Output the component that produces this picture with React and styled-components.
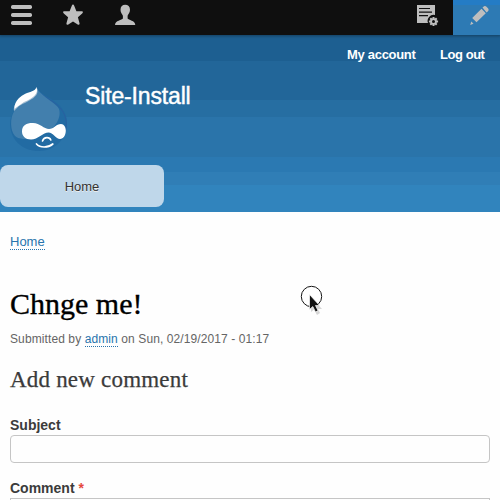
import React from "react";
import styled, { createGlobalStyle } from "styled-components";

const GlobalStyle = createGlobalStyle`
  * { box-sizing: border-box; }
  html, body { margin: 0; background: #fefefe; }
  body { overflow: hidden; font-family: "Liberation Sans", Arial, sans-serif; color: #3b3b3b; }
  h1, h2, p { margin: 0; font-weight: 400; white-space: nowrap; }
`;

const Page = styled.div`
  position: relative;
  width: 500px;
  height: 500px;
  overflow: hidden;
`;

const Toolbar = styled.nav`
  position: relative;
  display: flex;
  height: 35px;
  background: #0f0f0f;
  box-shadow: 0 0 3px 1px rgba(0, 0, 0, 0.35);
`;

const ToolbarItem = styled.div`
  width: ${(p) => p.$width}px;
  height: 35px;
  padding-left: ${(p) => p.$inset}px;
  margin-left: ${(p) => (p.$push ? "auto" : 0)};
  background: ${(p) =>
    p.$active ? "linear-gradient(#247cc5 0 5px, #2d7ab4 5px)" : "transparent"};
  svg { display: block; }
`;

const Header = styled.header`
  height: 177px;
  background: linear-gradient(
    #1d5f91 0 26px,
    #226699 26px 65px,
    #266ea2 65px 82px,
    #2a74aa 82px 122px,
    #2b79b2 122px 137px,
    #307eb6 137px 150px,
    #3184bd 150px
  );
`;

const AccountMenu = styled.div`
  display: flex;
  justify-content: flex-end;
  gap: 24px;
  height: 50px;
  padding: 12px 16px 0 0;
`;

const AccountLink = styled.a`
  width: ${(p) => p.$width}px;
  font-size: 13px;
  line-height: 16px;
  font-weight: 700;
  letter-spacing: ${(p) => p.$tracking}px;
  color: #fff;
  white-space: nowrap;
`;

const Branding = styled.div`
  display: flex;
  height: 80px;
  padding-left: 8px;
  gap: 13px;
`;

const SiteName = styled.div`
  padding-left: 2px;
  font-size: 23px;
  line-height: 23px;
  letter-spacing: -0.15px;
  -webkit-text-stroke: 0.45px #fff;
  color: #fff;
  white-space: nowrap;
`;

const MenuTab = styled.div`
  width: 164px;
  height: 42px;
  border-radius: 8px;
  background: #bfd7ea;
  color: #333;
  font-size: 13px;
  line-height: 43px;
  text-align: center;
  text-shadow: 0 1px 0 #eee;
`;

const Content = styled.main`
  padding: 22px 10px 0;
`;

const Link = styled.a`
  display: inline-block;
  color: #2874ad;
  border-bottom: 1px dotted #2874ad;
`;

const Breadcrumb = styled.div`
  height: 53px;
  font-size: 13px;
  line-height: 15px;
`;

const Title = styled.h1`
  height: 45px;
  font-family: "Liberation Serif", serif;
  font-size: 30px;
  line-height: 34px;
  letter-spacing: 0;
  -webkit-text-stroke: 0.35px #000;
  color: #000;
`;

const Submitted = styled.p`
  height: 34px;
  font-size: 12px;
  line-height: 15px;
  letter-spacing: 0.1px;
  color: #656565;
  a { line-height: 14px; }
`;

const Subtitle = styled.h2`
  height: 50px;
  font-family: "Liberation Serif", serif;
  font-size: 23px;
  line-height: 28px;
  letter-spacing: 0.2px;
  -webkit-text-stroke: 0.25px #3b3b3b;
`;

const Label = styled.label`
  display: block;
  height: 19px;
  font-size: 14px;
  line-height: 18px;
  font-weight: 700;
`;

const Required = styled.span`
  color: #e5483f;
`;

const Field = styled.div`
  height: ${(p) => p.$height}px;
  margin-bottom: 16px;
  border: 1px solid #c5c5c5;
  border-radius: ${(p) => p.$radius}px;
  background: #fefefe;
`;

const Cursor = styled.svg`
  position: absolute;
  left: 299px;
  top: 284px;
`;

const IconMenu = () => (
  <svg width="22" height="26" fill="#bebebe">
    <rect x="0" y="5" width="21" height="4" rx="1.7" />
    <rect x="0" y="13" width="21" height="4" rx="1.7" />
    <rect x="0" y="21" width="21" height="4" rx="1.7" />
  </svg>
);

const IconStar = () => (
  <svg width="22" height="26" fill="#bebebe">
    <path d="M10 4.5Q10.8 4.5 11.2 5.7L13.4 11.2H19.2Q20.8 11.9 19.2 13.4L14.9 17.2L16.6 23.4Q16.6 25.3 14.7 24.6L10 21.6L5.3 24.6Q3.4 25.3 3.4 23.4L5.1 17.2L.8 13.4Q-.8 11.9.8 11.2H6.6L8.8 5.7Q9.2 4.5 10 4.5Z" />
  </svg>
);

const IconUser = () => (
  <svg width="21" height="26" fill="#bebebe">
    <path d="M10.2 4.8C13 4.8 15 6.7 15 9.7C15 12.5 13.2 14.2 12.6 15.8V18.6C13.3 20.3 20.3 20.5 20.3 25H0C0 20.5 7.2 20.3 7.9 18.6V15.8C7.2 14.2 5.5 12.5 5.5 9.7C5.5 6.7 7.4 4.8 10.2 4.8Z" />
  </svg>
);

const IconForm = () => (
  <svg width="22" height="28">
    <path fill="#bebebe" d="M0 5H18V15A6 6 0 0 0 11 23H0Z" />
    <path stroke="#111" strokeWidth="1.2" d="M2 8.5H13M2 12.1H15M2 15.6H11" />
    <g transform="translate(16.5 21.5)">
      <path stroke="#bebebe" strokeWidth="2" d="M0-4.6V4.6M-4.6 0H4.6M-3.2-3.2L3.2 3.2M-3.2 3.2L3.2-3.2" />
      <circle r="3.3" fill="#bebebe" />
      <circle r="1.5" fill="#111" />
    </g>
  </svg>
);

const IconPencil = () => (
  <svg width="20" height="27" fill="#bebebe">
    <path d="M12.5 7.5L14.1 6.3Q15.2 5.5 16.5 6.8L18.2 8.5Q19.3 10 18 11.2L16.5 12.5ZM11.5 8.7L15.8 13.2L6.5 22.2L2.2 17.9Z" />
    <path d="M1.3 21.5L3.5 23.7L.2 25Z" />
  </svg>
);

const Druplicon = () => (
  <svg width="62" height="69" viewBox="0 0 62 69">
    <path fill="#226ba3" d="M28 3C28 8 22 13 13 19C5 25 2 32 2 40C3 56 15 66 31 66C47 66 59 54 59 38C59 27 53 20 43 14C36 10 32 7 28 3Z" />
    <path fill="none" stroke="#2b5f9f" strokeWidth=".9" d="M32 8C36 12 48 17 53 24C58 30 59 38 58 44" />
    <path fill="#427fad" d="M29 4C29 9 23 13 14 18C5 24 2 33 3.5 43C5 52 10 54 18 54C25 54 31 50 38 48C46 44 54 33 51 24C49 19 36 13 29 4Z" />
    <path fill="#a6bfd3" d="M29 3C32 12 22 15 11 21L6 26C5 21 9 15 15 11C20 7 27 7 29 3Z" />
    <path fill="#fff" d="M28.4 2C31 8 26 13 16 17L6.5 23.7C6.5 17 10 13 16 9.5C21 6.7 27 7 28.4 2Z" />
    <path fill="#fff" d="M14 46.5C14 40 19 37.8 25 38C32 38.3 36 44 41 44C46 44 48 39 53 39C56 39 57.8 42 57.8 45.5C57.8 50 55.5 54 52 54C48 54 45 47.5 40.5 47.5C35 47.5 30 54.5 23 54.5C17.5 54.5 14 51 14 46.5Z" />
    <path fill="none" stroke="#fff" strokeWidth="1.6" strokeLinecap="round" d="M34.5 56C36 51.7 41.5 51.7 42.8 55" />
    <path fill="none" stroke="#fff" strokeWidth="1.7" strokeLinecap="round" d="M28.5 59C32 63 40 63 44.8 59" />
  </svg>
);

const Pointer = () => (
  <Cursor width="26" height="32">
    <circle cx="12.5" cy="12.5" r="10.2" fill="none" stroke="#151515" />
    <path fill="#bbb" opacity=".6" d="M12 13V28L15 25.5L18 31L21 29L19 25H23Z" />
    <path fill="#111" stroke="#fff" strokeWidth=".7" d="M10.5 10.5V25.5L13.8 22.5L16.5 28L19 26.6L16.5 21.5H20.5Z" />
  </Cursor>
);

export default function App() {
  return (
    <>
      <GlobalStyle />
      <Page>
        <Toolbar>
          <ToolbarItem $width={52} $inset={11}><IconMenu /></ToolbarItem>
          <ToolbarItem $width={52} $inset={11}><IconStar /></ToolbarItem>
          <ToolbarItem $width={52} $inset={11}><IconUser /></ToolbarItem>
          <ToolbarItem $width={53} $inset={17} $push><IconForm /></ToolbarItem>
          <ToolbarItem $width={47} $inset={17} $active><IconPencil /></ToolbarItem>
        </Toolbar>
        <Header>
          <AccountMenu>
            <AccountLink $width={69} $tracking={-0.3}>My account</AccountLink>
            <AccountLink $width={44} $tracking={-0.45}>Log out</AccountLink>
          </AccountMenu>
          <Branding>
            <Druplicon />
            <SiteName>Site-Install</SiteName>
          </Branding>
          <MenuTab>Home</MenuTab>
        </Header>
        <Content>
          <Breadcrumb><Link>Home</Link></Breadcrumb>
          <Title>Chnge me!</Title>
          <Submitted>Submitted by <Link>admin</Link> on Sun, 02/19/2017 - 01:17</Submitted>
          <Subtitle>Add new comment</Subtitle>
          <Label>Subject</Label>
          <Field $height={28} $radius={4} />
          <Label>Comment <Required>*</Required></Label>
          <Field $height={30} $radius={0} />
        </Content>
        <Pointer />
      </Page>
    </>
  );
}
